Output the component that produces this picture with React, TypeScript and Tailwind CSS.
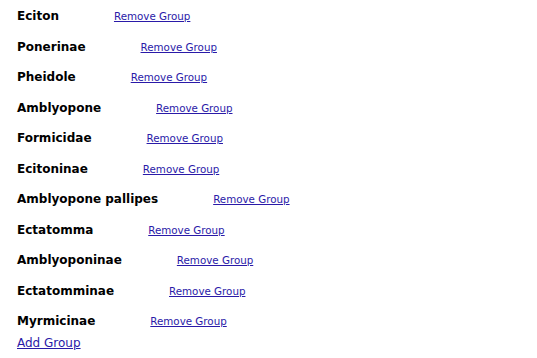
const groups = [
  "Eciton",
  "Ponerinae",
  "Pheidole",
  "Amblyopone",
  "Formicidae",
  "Ecitoninae",
  "Amblyopone pallipes",
  "Ectatomma",
  "Amblyoponinae",
  "Ectatomminae",
  "Myrmicinae",
];

export default function App() {
  return (
    <div className="min-h-screen bg-white px-[17px] pt-[1px] font-['DejaVu_Sans',Verdana,sans-serif]">
      {groups.map((name) => (
        <div key={name} className="flex items-baseline h-[30.5px] leading-[30.5px]">
          <span className="text-[12px] font-bold text-black">{name}</span>
          <a href="#" className="ml-[55px] text-[10.3px] text-[#2a1aa8] underline">
            Remove Group
          </a>
        </div>
      ))}
      <div className="leading-[14px] mt-[-2px]">
        <a href="#" className="text-[12px] text-[#2a1aa8] underline">
          Add Group
        </a>
      </div>
    </div>
  );
}
